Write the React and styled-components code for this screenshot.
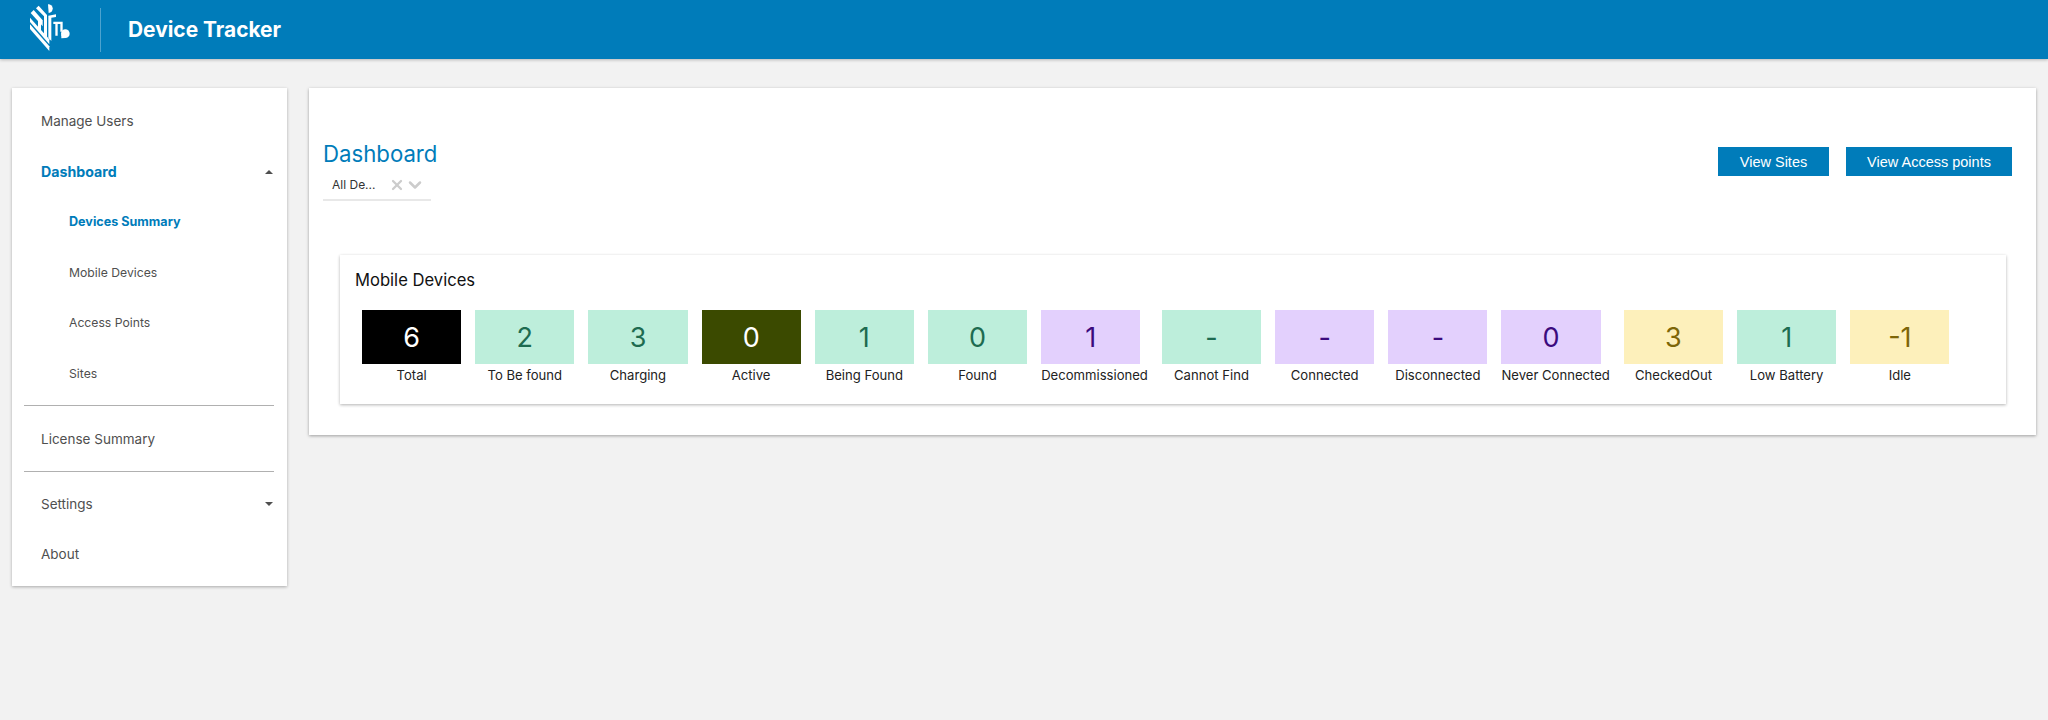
import { useState } from 'react';
import styled, { createGlobalStyle } from 'styled-components';
import { ChevronDown, X } from 'lucide-react';

const GlobalStyle = createGlobalStyle`
  * { box-sizing: border-box; }
  html, body { margin: 0; padding: 0; background: #f2f2f2; }
  body { font-family: Inter, "Liberation Sans", sans-serif; height: 720px; overflow: hidden; }
`;

const tones = {
  black: { bg: '#000000', fg: '#ffffff' },
  olive: { bg: '#3b4a00', fg: '#ffffff' },
  green: { bg: '#bdeedb', fg: '#1d6b50' },
  purple: { bg: '#e3d0fd', fg: '#3b0a7d' },
  yellow: { bg: '#fdf0bb', fg: '#7d6608' },
};

const stats = [
  { label: 'Total', value: '6', tone: 'black' },
  { label: 'To Be found', value: '2', tone: 'green' },
  { label: 'Charging', value: '3', tone: 'green' },
  { label: 'Active', value: '0', tone: 'olive' },
  { label: 'Being Found', value: '1', tone: 'green' },
  { label: 'Found', value: '0', tone: 'green' },
  { label: 'Decommissioned', value: '1', tone: 'purple' },
  { label: 'Cannot Find', value: '-', tone: 'green' },
  { label: 'Connected', value: '-', tone: 'purple' },
  { label: 'Disconnected', value: '-', tone: 'purple' },
  { label: 'Never Connected', value: '0', tone: 'purple' },
  { label: 'CheckedOut', value: '3', tone: 'yellow' },
  { label: 'Low Battery', value: '1', tone: 'green' },
  { label: 'Idle', value: '-1', tone: 'yellow' },
];

function Logo() {
  return (
    <LogoMark viewBox="0 0 150 156" fill="#fff">
      <path d="M12 70 L70 136 L70 150 L12 84 Z" />
      <path d="M12 50 L70 115 L70 130 L12 63 Z" />
      <path d="M14 36 L23 27 L50 58 L50 76 Z" />
      <path d="M36 48 L45 58 L45 94 L36 84 Z" />
      <path d="M30 22 L38 14 L63 42 L63 110 L54 100 L54 46 Z" />
      <path d="M66 10 A12 12 0 0 1 68 36 Z" />
      <path d="M67 44 L90 40 L90 48 L76 50 L76 120 L67 110 Z" />
      <path d="M82 62 L110 62 L110 92 L103 92 L103 69 L95 69 L95 104 L88 104 L88 69 L82 69 Z" />
      <circle cx="118" cy="98" r="13" />
      <path d="M106 100 L106 112 L118 111 Z" />
    </LogoMark>
  );
}

function App() {
  const [device] = useState('All De...');
  return (
    <>
      <GlobalStyle />
      <TopBar>
        <LogoBox>
          <Logo />
        </LogoBox>
        <AppName>Device Tracker</AppName>
      </TopBar>
      <Page>
        <SideNav>
          <NavList>
            <NavItem>Manage Users</NavItem>
            <NavItem $active>
              Dashboard
              <Caret $up />
            </NavItem>
            <SubItem $active>Devices Summary</SubItem>
            <SubItem>Mobile Devices</SubItem>
            <SubItem>Access Points</SubItem>
            <SubItem>Sites</SubItem>
          </NavList>
          <Divider />
          <NavItem>License Summary</NavItem>
          <Divider />
          <NavList>
            <NavItem>
              Settings
              <Caret />
            </NavItem>
            <NavItem>About</NavItem>
          </NavList>
        </SideNav>
        <Main>
          <MainHeader>
            <div>
              <Title>Dashboard</Title>
              <DeviceSelect>
                <SelectValue>{device}</SelectValue>
                <X size={16} strokeWidth={3.4} color="#cccccc" />
                <ChevronDown size={20} strokeWidth={3} color="#cccccc" />
              </DeviceSelect>
            </div>
            <Actions>
              <ActionButton $width={111}>View Sites</ActionButton>
              <ActionButton $width={166}>View Access points</ActionButton>
            </Actions>
          </MainHeader>
          <StatsCard>
            <StatsTitle>Mobile Devices</StatsTitle>
            <StatsRow>
              {stats.map((s) => (
                <Stat key={s.label}>
                  <StatBox $tone={s.tone}>{s.value}</StatBox>
                  <StatLabel>{s.label}</StatLabel>
                </Stat>
              ))}
            </StatsRow>
          </StatsCard>
        </Main>
      </Page>
    </>
  );
}

const TopBar = styled.header`
  height: 59px;
  background: #007cba;
  box-shadow: 0 1px 3px rgba(0, 0, 0, 0.25);
  display: flex;
  align-items: center;
`;

const LogoBox = styled.div`
  width: 101px;
  height: 44px;
  margin-top: 1px;
  padding-left: 26px;
  border-right: 1px solid rgba(255, 255, 255, 0.3);
  display: flex;
  align-items: center;
`;

const LogoMark = styled.svg`
  width: 50px;
  height: 52px;
  flex: none;
  margin-top: -6px;
`;

const AppName = styled.div`
  margin-left: 27px;
  color: #fff;
  font-size: 20.9px;
  font-weight: 700;
`;

const Page = styled.div`
  display: flex;
  align-items: flex-start;
  gap: 22px;
  padding: 29px 12px 0;
`;

const SideNav = styled.nav`
  flex: 0 0 275px;
  background: #fff;
  box-shadow: 0 1px 3px rgba(0, 0, 0, 0.3);
  padding: 8px 0 6px;
`;

const NavList = styled.div`
  display: flex;
  flex-direction: column;
`;

const NavItem = styled.div`
  height: 50.4px;
  padding: 0 14px 0 29px;
  display: flex;
  align-items: center;
  justify-content: space-between;
  font-size: ${(p) => (p.$active ? 14.2 : 13.5)}px;
  font-weight: ${(p) => (p.$active ? 700 : 400)};
  color: ${(p) => (p.$active ? '#007cba' : '#4f4f4f')};
`;

const SubItem = styled(NavItem)`
  padding-left: 57px;
  font-size: ${(p) => (p.$active ? 12.6 : 12.2)}px;
`;

const Caret = styled.span`
  width: 0;
  height: 0;
  border-left: 4px solid transparent;
  border-right: 4px solid transparent;
  ${(p) => (p.$up ? 'border-bottom: 4px solid #4f4f4f;' : 'border-top: 4px solid #4f4f4f;')}
`;

const Divider = styled.hr`
  margin: 7px 13px 7px 12px;
  border: 0;
  border-top: 1px solid #b0b0b0;
`;

const Main = styled.main`
  flex: 1;
  height: 347px;
  background: #fff;
  box-shadow: 0 1px 3px rgba(0, 0, 0, 0.35);
  padding: 50px 30px 0 31px;
`;

const MainHeader = styled.div`
  display: flex;
  justify-content: space-between;
  align-items: flex-start;
  margin: 0 -6px 54px -17px;
`;

const Title = styled.h1`
  margin: 0;
  height: 32px;
  font-size: 22.2px;
  line-height: 32px;
  font-weight: 400;
  color: #007cba;
`;

const DeviceSelect = styled.div`
  width: 108px;
  height: 31px;
  display: flex;
  align-items: center;
  padding-left: 9px;
  border-bottom: 2px solid #e8e8e8;
`;

const SelectValue = styled.span`
  width: 57px;
  font-size: 12px;
  color: #333;
`;

const Actions = styled.div`
  display: flex;
  gap: 17px;
  margin-top: 9px;
`;

const ActionButton = styled.button`
  width: ${(p) => p.$width}px;
  height: 29px;
  border: 0;
  padding: 0;
  background: #007cba;
  color: #fff;
  font-family: "Liberation Sans", sans-serif;
  font-size: 14.5px;
`;

const StatsCard = styled.section`
  height: 149px;
  background: #fff;
  box-shadow: 0 1px 3px rgba(0, 0, 0, 0.3);
  padding: 14px 15px 0;
`;

const StatsTitle = styled.h2`
  margin: 0;
  height: 41px;
  font-size: 16.6px;
  line-height: 22px;
  font-weight: 400;
  color: #111;
`;

const StatsRow = styled.div`
  display: flex;
  gap: 14px;
  padding-left: 7px;
`;

const Stat = styled.div`
  min-width: 99.2px;
  display: flex;
  flex-direction: column;
`;

const StatBox = styled.div`
  width: 99.2px;
  height: 54px;
  display: flex;
  align-items: center;
  justify-content: center;
  font-size: 27px;
  font-weight: 400;
  background: ${(p) => tones[p.$tone].bg};
  color: ${(p) => tones[p.$tone].fg};
`;

const StatLabel = styled.div`
  margin-top: 3px;
  font-size: 13.1px;
  line-height: 17px;
  text-align: center;
  white-space: nowrap;
  color: #222;
`;

export default App;
